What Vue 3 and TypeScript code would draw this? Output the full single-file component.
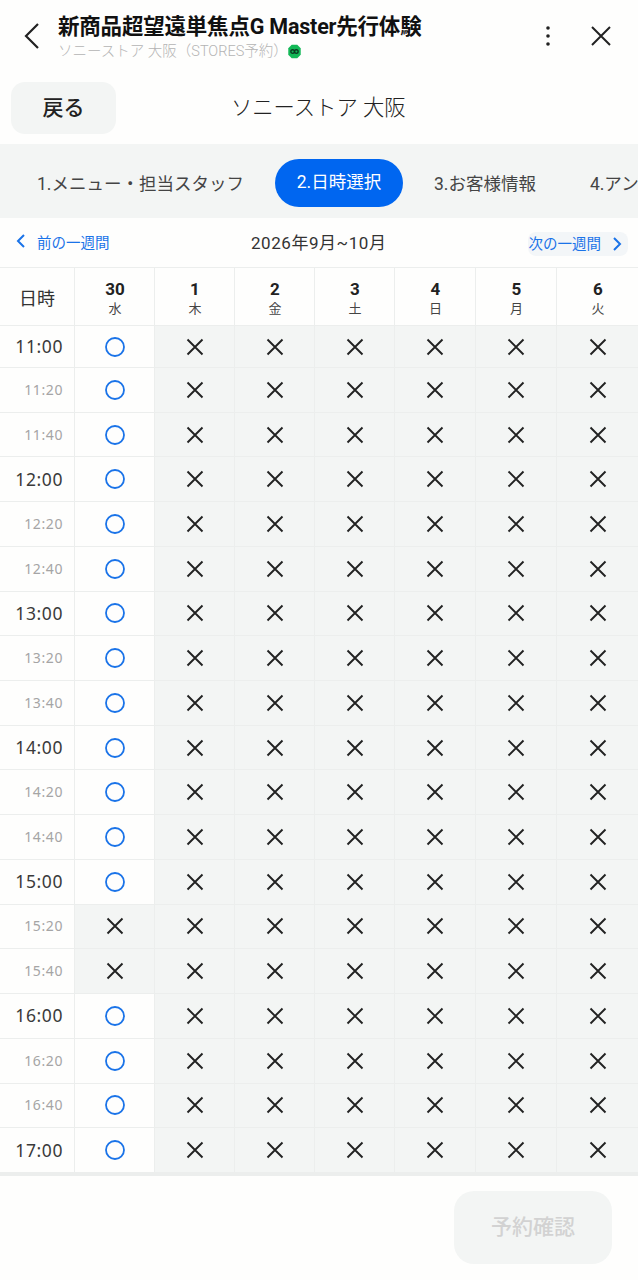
<template>
  <div class="page">
    <header class="appbar">
      <button class="icon-btn back" aria-label="back">
        <svg width="18" height="28" viewBox="0 0 18 28"><path d="M15 2 3 14l12 12" fill="none" stroke="#222" stroke-width="2.2" /></svg>
      </button>
      <div class="titles">
        <div class="title">新商品超望遠単焦点G Master先行体験</div>
        <div class="subtitle">
          <span>ソニーストア 大阪（STORES予約）</span>
          <svg class="shield" width="13" height="15" viewBox="0 0 12 14">
            <path d="M3.4.6h5.2L11.8 4v6l-3.2 3.4H3.4L.2 10V4z" fill="#12b856" />
            <circle cx="4.3" cy="7" r="1.7" fill="none" stroke="#0b3b22" stroke-width="1.3" />
            <circle cx="7.7" cy="7" r="1.7" fill="none" stroke="#0b3b22" stroke-width="1.3" />
          </svg>
        </div>
      </div>
      <button class="icon-btn more" aria-label="more">
        <svg width="6" height="22" viewBox="0 0 6 22"><circle cx="3" cy="3" r="1.8" fill="#222" /><circle cx="3" cy="11" r="1.8" fill="#222" /><circle cx="3" cy="19" r="1.8" fill="#222" /></svg>
      </button>
      <button class="icon-btn close" aria-label="close">
        <svg width="22" height="22" viewBox="0 0 22 22"><path d="M2 2l18 18M20 2 2 20" fill="none" stroke="#222" stroke-width="2" /></svg>
      </button>
    </header>

    <div class="store-row">
      <button class="return-btn">戻る</button>
      <div class="store-name">ソニーストア 大阪</div>
    </div>

    <nav class="steps">
      <span class="step s1">1.メニュー・担当スタッフ</span>
      <span class="step current">2.日時選択</span>
      <span class="step s3">3.お客様情報</span>
      <span class="step s4">4.アンケート</span>
    </nav>

    <div class="week-nav">
      <button class="week-btn prev">
        <svg width="11" height="16" viewBox="0 0 11 16"><path d="M9 2 3 8l6 6" fill="none" stroke="#1a73e8" stroke-width="2" /></svg>
        <span>前の一週間</span>
      </button>
      <div class="range">2026年9月~10月</div>
      <button class="week-btn next">
        <span>次の一週間</span>
        <svg width="11" height="16" viewBox="0 0 11 16"><path d="M2 2l6 6-6 6" fill="none" stroke="#1a73e8" stroke-width="2" /></svg>
      </button>
    </div>

    <div class="table">
      <div class="cell head corner">日時</div>
      <div v-for="d in days" :key="d.num" class="cell head">
        <span class="num">{{ d.num }}</span>
        <span class="dow">{{ d.dow }}</span>
      </div>
      <template v-for="row in rows" :key="row.time">
        <div class="cell time" :class="{ major: row.time.endsWith(':00') }">{{ row.time }}</div>
        <div
          v-for="(open, j) in row.slots"
          :key="j"
          class="cell slot"
          :class="{ closed: !open }"
        >
          <svg v-if="open" width="20" height="20" viewBox="0 0 20 20"><circle cx="10" cy="10" r="9" fill="none" stroke="#1a73e8" stroke-width="1.8" /></svg>
          <svg v-else width="18" height="18" viewBox="0 0 18 18"><path d="M1.5 1.5l15 15M16.5 1.5l-15 15" fill="none" stroke="#222" stroke-width="1.9" /></svg>
        </div>
      </template>
    </div>

    <footer class="footer">
      <button class="confirm" disabled>予約確認</button>
    </footer>
  </div>
</template>

<script setup lang="ts">
const days = [
  { num: 30, dow: "水" },
  { num: 1, dow: "木" },
  { num: 2, dow: "金" },
  { num: 3, dow: "土" },
  { num: 4, dow: "日" },
  { num: 5, dow: "月" },
  { num: 6, dow: "火" }
]

const times: string[] = []
for (let h = 11; h <= 17; h++) {
  for (const m of ["00", "20", "40"]) {
    if (h === 17 && m !== "00") continue
    times.push(`${h}:${m}`)
  }
}

// 15:20 and 15:40 are fully booked on the 30th, everything after that day is closed
const rows = times.map((time) => ({
  time,
  slots: days.map((_, i) => i === 0 && time !== "15:20" && time !== "15:40")
}))
</script>

<style>
html, body {
  margin: 0;
  background: #fefefd;
}
</style>

<style scoped>
.page {
  width: 638px;
  height: 1280px;
  overflow: hidden;
  background: #fefefd;
  font-family: Roboto, "Noto Sans CJK JP", sans-serif;
  color: #222;
}

button {
  font-family: inherit;
  border: none;
  background: none;
  padding: 0;
}

.appbar {
  display: flex;
  align-items: center;
  height: 72px;
}

.icon-btn {
  display: flex;
  align-items: center;
  justify-content: center;
}

.back {
  width: 18px;
  margin: 0 17px 0 23px;
}

.titles {
  flex: 1;
  min-width: 0;
  padding-top: 2px;
}

.title {
  font-size: 21.5px;
  line-height: 28px;
  font-weight: 700;
  color: #111;
  white-space: nowrap;
  letter-spacing: -0.2px;
}

.subtitle {
  display: flex;
  align-items: center;
  gap: 0;
  margin-top: 1px;
  font-size: 14.5px;
  line-height: 20px;
  font-weight: 300;
  color: #b4b4b4;
  white-space: nowrap;
}

.more {
  width: 6px;
  margin-right: 39px;
}

.close {
  width: 22px;
  margin-right: 26px;
}

.store-row {
  display: flex;
  align-items: center;
  height: 72px;
  padding-left: 11px;
}

.return-btn {
  width: 105px;
  height: 52px;
  padding-bottom: 5px;
  border-radius: 14px;
  background: #f3f5f4;
  font-size: 21px;
  color: #222;
  font-weight: 500;
}

.store-name {
  margin-left: 115px;
  padding-bottom: 5px;
  font-size: 21.3px;
  font-weight: 300;
  color: #222;
}

.steps {
  display: flex;
  align-items: center;
  box-sizing: border-box;
  height: 74px;
  padding-top: 3px;
  background: #f3f5f4;
  overflow: hidden;
  white-space: nowrap;
  font-size: 17.5px;
  color: #444;
}

.step {
  flex: none;
}

.s1 {
  margin-left: 37px;
}

.current {
  margin-left: 31px;
  width: 128px;
  height: 48px;
  line-height: 47px;
  text-align: center;
  border-radius: 24px;
  background: #0066f0;
  color: #fff;
}

.s3 {
  margin-left: 31px;
}

.s4 {
  margin-left: 54px;
}

.week-nav {
  display: flex;
  align-items: center;
  justify-content: space-between;
  height: 49px;
  position: relative;
}

.week-btn {
  display: flex;
  align-items: center;
  font-size: 14.5px;
  color: #1a73e8;
}

.prev {
  gap: 11px;
  margin: 0 0 3px 15px;
}

.next {
  gap: 11px;
  height: 24px;
  padding: 0 5px 0 1px;
  margin: 3px 10px 0 0;
  border-radius: 8px;
  background: #f3f6f8;
}

.next span {
  padding-bottom: 3px;
}

.range {
  position: absolute;
  left: 251px;
  padding-bottom: 2px;
  font-size: 17px;
  color: #333;
  letter-spacing: 0.55px;
}

.table {
  display: grid;
  grid-template-columns: 75px 80px 80px 80px 80px 81px 81px 81px;
  grid-template-rows: 58px 42px repeat(18, 44.72px);
  border-top: 1.5px solid #eceeed;
  border-bottom: 3px solid #eceeed;
}

.cell {
  display: flex;
  align-items: center;
  justify-content: center;
  box-sizing: border-box;
  border-right: 1px solid #eceeed;
  border-bottom: 1.5px solid #eceeed;
}

.cell:nth-child(8n) {
  border-right: none;
}

.head {
  flex-direction: column;
  background: #fefefd;
  padding-left: 1px;
}

.corner {
  font-size: 18px;
  color: #333;
  padding-left: 0;
}

.num {
  font-size: 17px;
  line-height: 21px;
  font-weight: 700;
  color: #222;
  margin-top: 3px;
}

.dow {
  font-size: 13px;
  line-height: 17px;
  color: #444;
}

.time {
  justify-content: flex-end;
  padding: 0 11px 1px 0;
  font-family: "Noto Sans", "Noto Sans CJK JP", sans-serif;
  font-size: 14px;
  letter-spacing: 0.6px;
  color: #a5a5a5;
}

.time.major {
  font-size: 17.5px;
  letter-spacing: 0.6px;
  color: #3a3a3a;
}

.slot.closed {
  background: #f3f5f4;
}

.footer {
  display: flex;
  justify-content: flex-end;
  padding: 15px 26px 0 0;
}

.confirm {
  width: 158px;
  height: 73px;
  padding-bottom: 5px;
  border-radius: 20px;
  background: #f3f5f4;
  font-size: 21px;
  font-weight: 500;
  color: #d2d2d2;
}
</style>
